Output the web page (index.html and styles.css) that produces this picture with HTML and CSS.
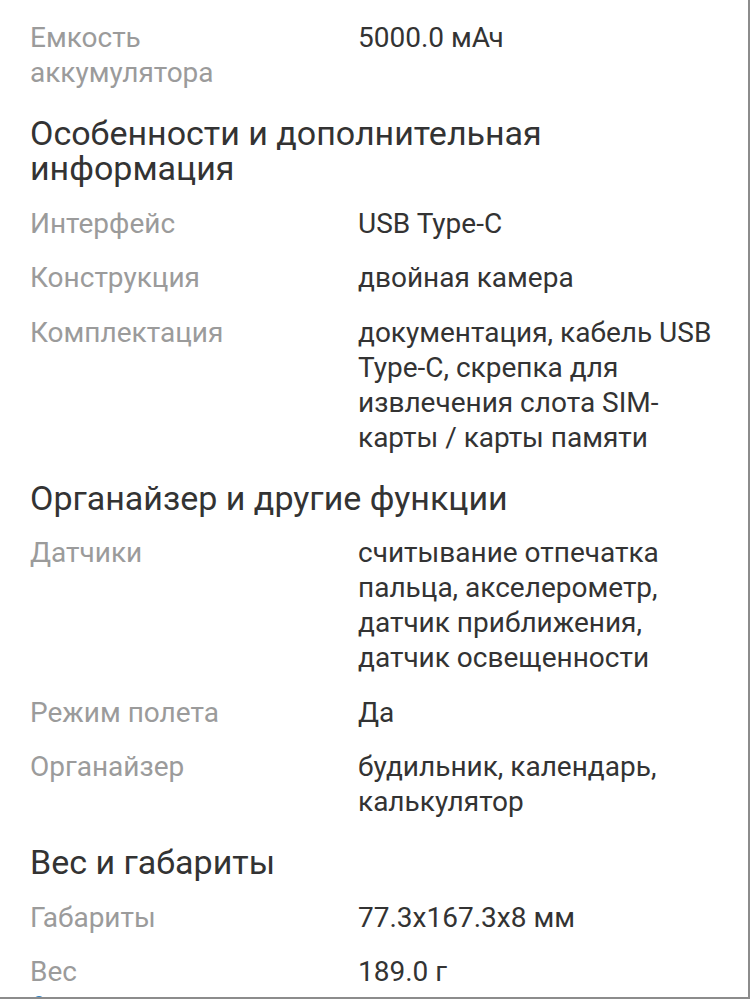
FILE: index.html
```html
<!DOCTYPE html>
<html lang="ru">
<head>
<meta charset="utf-8">
<link rel="stylesheet" href="styles.css">
</head>
<body>
<div class="frame">
  <div class="specs">
    <div class="row"><div class="label">Емкость аккумулятора</div><div class="value">5000.0 мАч</div></div>

    <h2 class="heading">Особенности и дополнительная информация</h2>
    <div class="row"><div class="label">Интерфейс</div><div class="value">USB Type-C</div></div>
    <div class="row"><div class="label">Конструкция</div><div class="value">двойная камера</div></div>
    <div class="row"><div class="label">Комплектация</div><div class="value">документация, кабель USB Type-C, скрепка для извлечения слота SIM-карты / карты памяти</div></div>

    <h2 class="heading">Органайзер и другие функции</h2>
    <div class="row"><div class="label">Датчики</div><div class="value">считывание отпечатка пальца, акселерометр, датчик приближения, датчик освещенности</div></div>
    <div class="row"><div class="label">Режим полета</div><div class="value">Да</div></div>
    <div class="row"><div class="label">Органайзер</div><div class="value">будильник, календарь, калькулятор</div></div>

    <h2 class="heading">Вес и габариты</h2>
    <div class="row"><div class="label">Габариты</div><div class="value">77.3x167.3x8 мм</div></div>
    <div class="row"><div class="label">Вес</div><div class="value">189.0 г</div></div>
    <div class="more"><span class="dot"></span></div>
  </div>
</div>
</body>
</html>
```

FILE: styles.css
```css
html, body {
  margin: 0;
  padding: 0;
  background: #ffffff;
}

body {
  font-family: Roboto, "Noto Sans", "Liberation Sans", sans-serif;
  -webkit-font-smoothing: antialiased;
}

.frame {
  width: 748px;
  height: 997px;
  overflow: hidden;
  border-right: 2px solid #8c8c8c;
  border-bottom: 2px solid #8c8c8c;
  background: #ffffff;
}

.specs {
  padding: 10px 30px 0 30px;
}

.row {
  display: grid;
  grid-template-columns: 328px 1fr;
  padding: 10px 0 9.5px 0;
  font-size: 28px;
  line-height: 35px;
}

.label {
  color: #9b9b9b;
  padding-right: 50px;
}

.value {
  color: #333333;
  padding-right: 0;
}

.heading {
  margin: 0;
  padding: 16.5px 0 9.5px 0;
  font-size: 34px;
  font-weight: 400;
  line-height: 35px;
  color: #333333;
}

.more {
  height: 20px;
}

.dot {
  display: block;
  width: 12px;
  height: 12px;
  margin: -3px 0 0 3px;
  border-radius: 50%;
  background: #2f7fc1;
}
```
